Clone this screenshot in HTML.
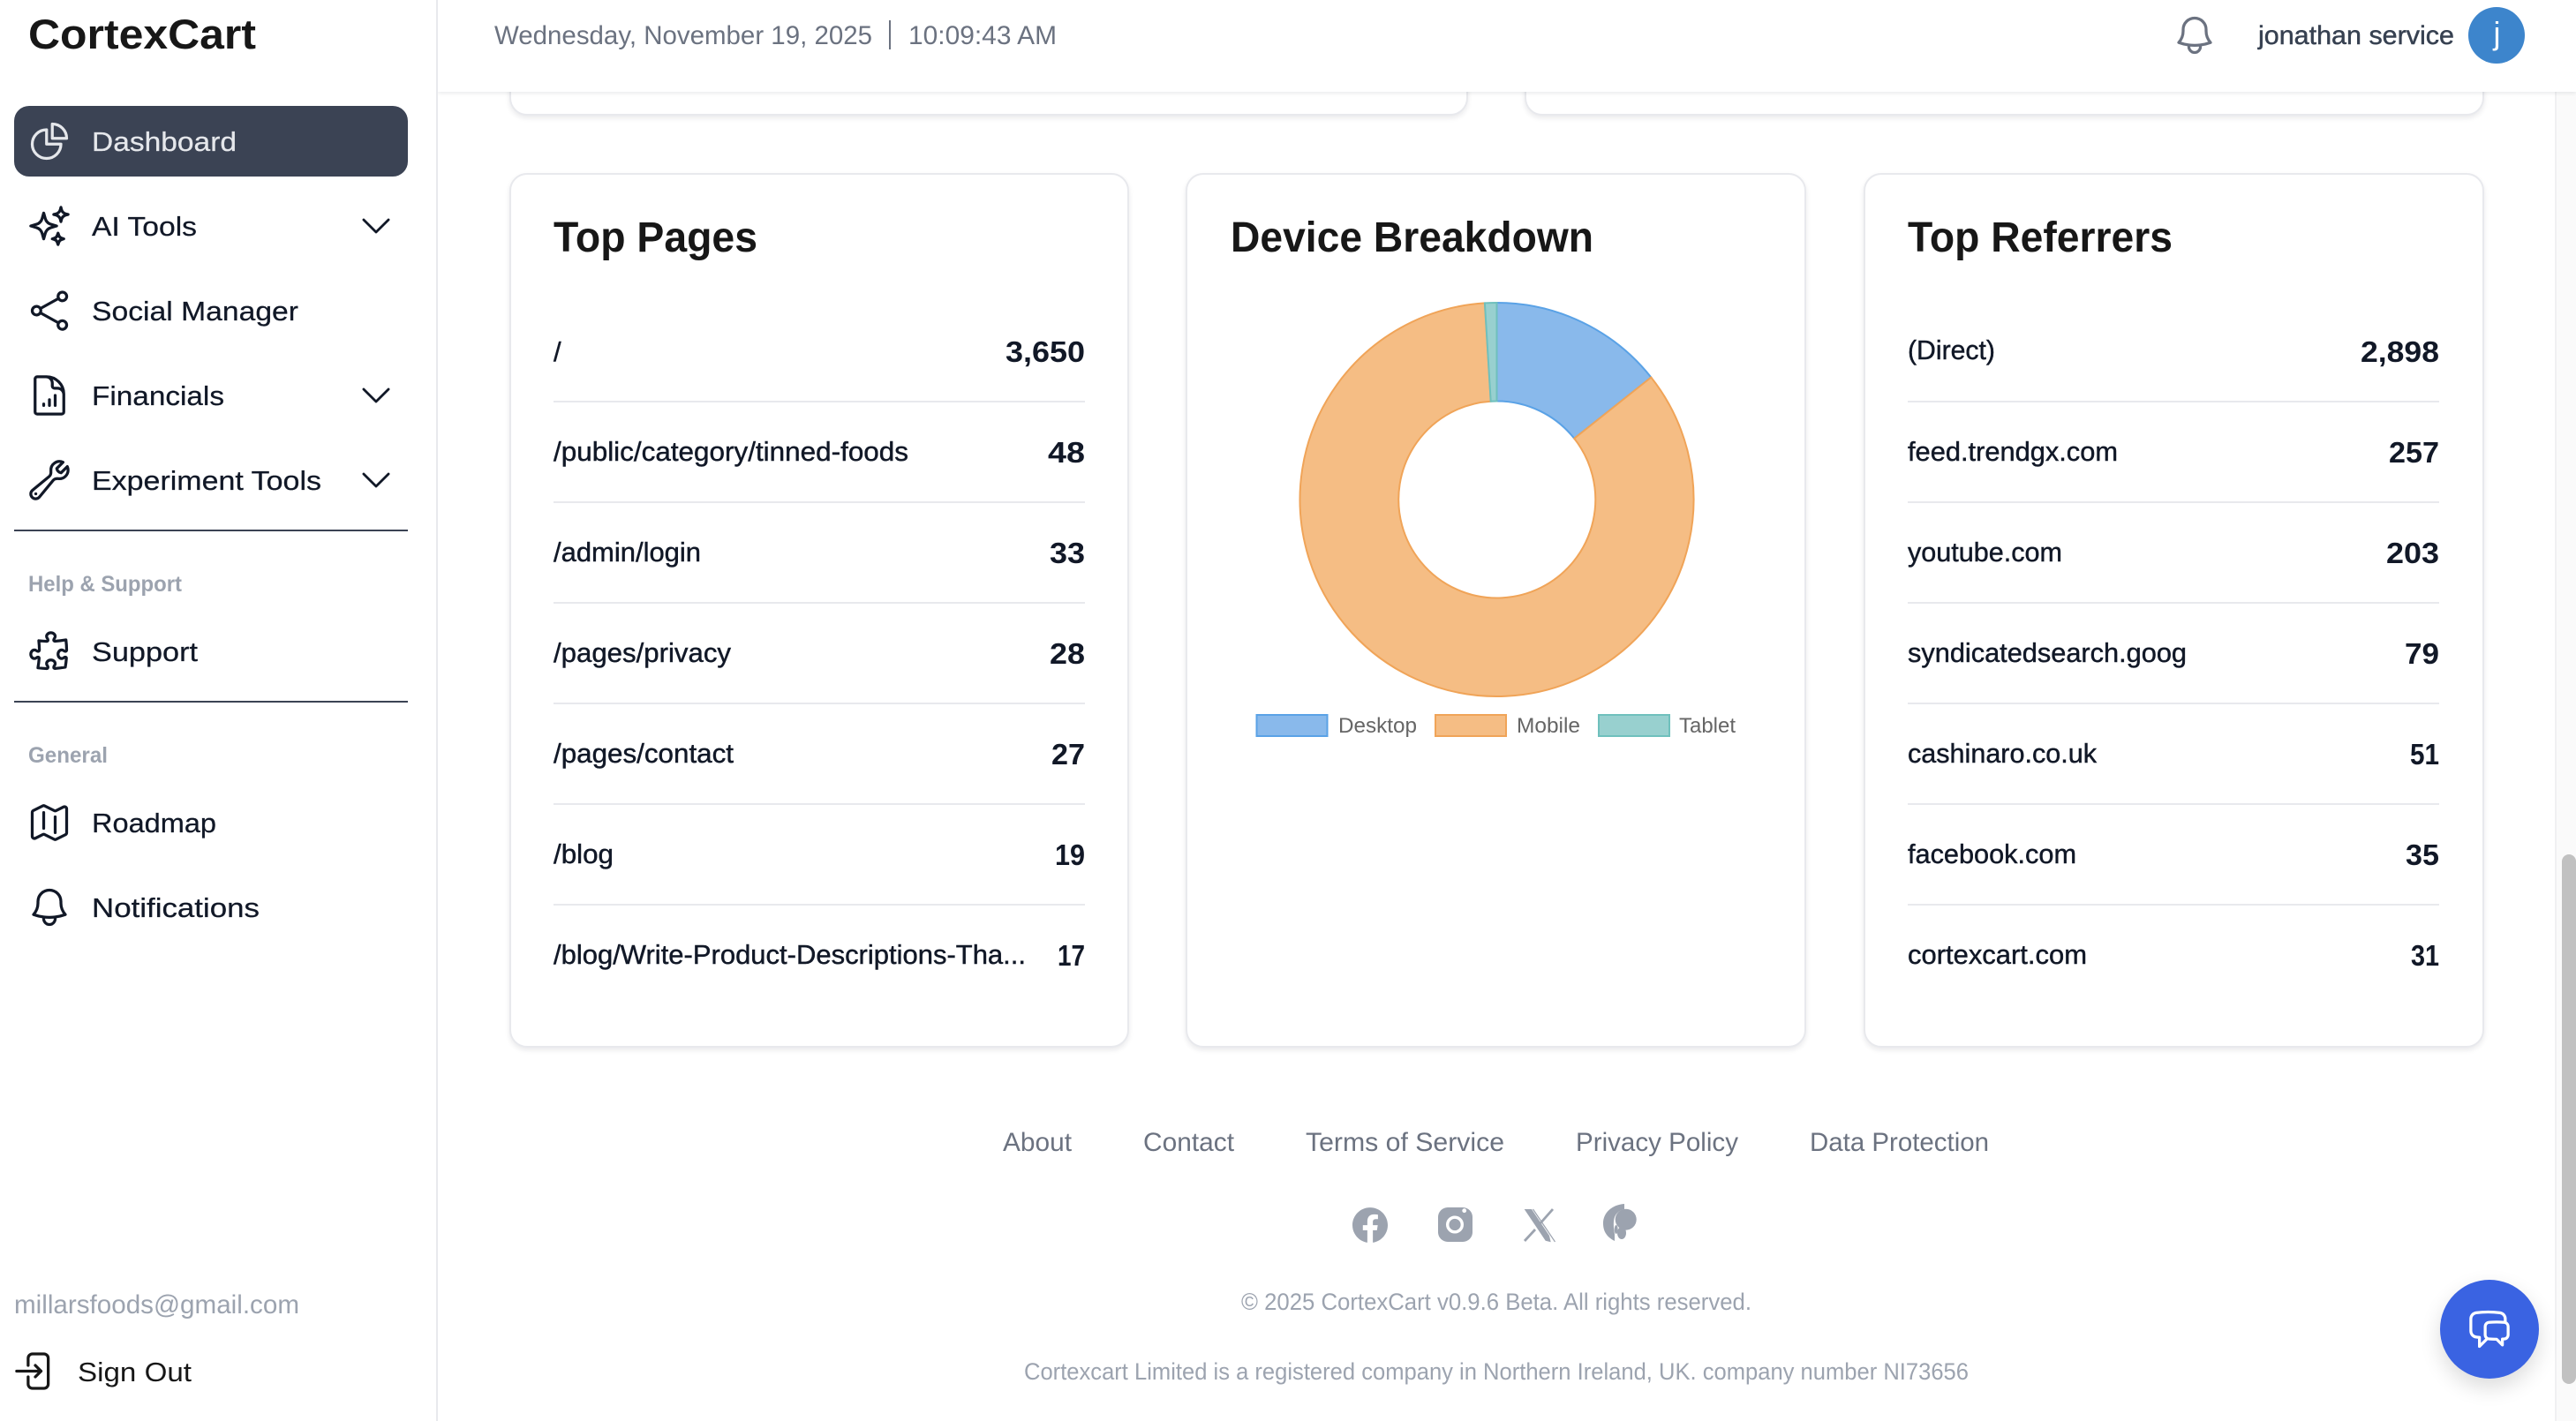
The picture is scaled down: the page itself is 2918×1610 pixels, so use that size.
<!DOCTYPE html>
<html lang="en"><head><meta charset="utf-8"><title>CortexCart Dashboard</title>
<style>
html,body{margin:0;padding:0;width:2918px;height:1610px;overflow:hidden;background:#fff}
div{position:absolute;box-sizing:border-box}
.card{background:#fff;border:2px solid #e8e9ed;border-radius:20px;box-shadow:0 3px 6px rgba(17,24,39,.09)}
svg#o{position:absolute;left:0;top:0;z-index:5}
text{font-family:"Liberation Sans",Arial,sans-serif;fill:#111827;font-size:31px}
.m{stroke:#111827;stroke-width:.45px}
.nv{fill:#111827;stroke:#111827;stroke-width:.25px}
.n{font-weight:700;font-size:33px}
.t{font-weight:700;font-size:48px;fill:#171717}
.g{fill:#9ca3af}
.f{fill:#6b7280;font-size:30px}
.c{fill:#9ca3af;font-size:27px}
.h{fill:#9ca3af;font-weight:700;font-size:25px}
.l{fill:#666;font-size:24px}
.i{fill:none;stroke:#111827;stroke-width:1.5;stroke-linecap:round;stroke-linejoin:round}
</style></head><body>
<div style="left:0;top:0;width:496px;height:1610px;background:#fff;border-right:2px solid #e8e9ed;z-index:3"></div>
<div style="left:2894px;top:104px;width:24px;height:1506px;background:#fafafa;border-left:2px solid #f0f0f2"></div>
<div style="left:2902px;top:968px;width:16px;height:600px;background:#c1c1c1;border-radius:8px"></div>
<div class="card" style="left:577px;top:-60px;width:1086px;height:191px"></div>
<div class="card" style="left:1727px;top:-60px;width:1087px;height:191px"></div>
<div class="card" style="left:577px;top:196px;width:702px;height:991px"></div>
<div class="card" style="left:1343px;top:196px;width:703px;height:991px"></div>
<div class="card" style="left:2111px;top:196px;width:703px;height:991px"></div>
<div style="left:496px;top:0;width:2422px;height:104px;background:#fff;box-shadow:0 2px 4px rgba(17,24,39,.08);z-index:2"></div>
<div style="left:16px;top:120px;width:446px;height:80px;background:#3b4354;border-radius:17px;z-index:4"></div>
<div style="left:16px;top:600px;width:446px;height:2px;background:#3b4354;z-index:4"></div>
<div style="left:16px;top:794px;width:446px;height:2px;background:#3b4354;z-index:4"></div>
<div style="left:2764px;top:1450px;width:112px;height:112px;background:#3a63e2;border-radius:50%;box-shadow:0 10px 24px rgba(0,0,0,.14);z-index:4"></div>
<div style="left:2796px;top:8px;width:64px;height:64px;background:#3d85cc;border-radius:50%;z-index:4"></div>

<svg id="o" width="2918" height="1610" viewBox="0 0 2918 1610" xmlns="http://www.w3.org/2000/svg">
<!-- brand -->
<text x="32" y="55" textLength="258" lengthAdjust="spacingAndGlyphs" style="font-size:47px;font-weight:700;fill:#171717">CortexCart</text>

<!-- nav icons -->
<svg x="30" y="134" width="52" height="52" viewBox="0 0 24 24"><g class="i" style="stroke:#e5e7eb"><path d="M10.5 6a7.5 7.5 0 1 0 7.5 7.5h-7.5V6Z"/><path d="M13.5 10.5H21A7.5 7.5 0 0 0 13.5 3v7.5Z"/></g></svg>
<svg x="30" y="230" width="52" height="52" viewBox="0 0 24 24"><path class="i" d="M9.813 15.904 9 18.75l-.813-2.846a4.5 4.5 0 0 0-3.09-3.09L2.25 12l2.846-.813a4.5 4.5 0 0 0 3.09-3.09L9 5.25l.813 2.846a4.5 4.5 0 0 0 3.09 3.09L15.75 12l-2.846.813a4.5 4.5 0 0 0-3.09 3.09ZM18.259 8.715 18 9.75l-.259-1.035a3.375 3.375 0 0 0-2.455-2.456L14.25 6l1.036-.259a3.375 3.375 0 0 0 2.455-2.456L18 2.25l.259 1.035a3.375 3.375 0 0 0 2.456 2.456L21.75 6l-1.035.259a3.375 3.375 0 0 0-2.456 2.456ZM16.894 20.567 16.5 21.75l-.394-1.183a2.25 2.25 0 0 0-1.423-1.423L13.5 18.75l1.183-.394a2.25 2.25 0 0 0 1.423-1.423l.394-1.183.394 1.183a2.25 2.25 0 0 0 1.423 1.423l1.183.394-1.183.394a2.25 2.25 0 0 0-1.423 1.423Z"/></svg>
<svg x="30" y="326" width="52" height="52" viewBox="0 0 24 24"><path class="i" d="M7.217 10.907a2.25 2.25 0 1 0 0 2.186m0-2.186c.18.324.283.696.283 1.093s-.103.77-.283 1.093m0-2.186 9.566-5.314m-9.566 7.5 9.566 5.314m0 0a2.25 2.25 0 1 0 3.935 2.186 2.25 2.25 0 0 0-3.935-2.186Zm0-12.814a2.25 2.25 0 1 0 3.933-2.185 2.25 2.25 0 0 0-3.933 2.185Z"/></svg>
<svg x="30" y="422" width="52" height="52" viewBox="0 0 24 24"><path class="i" d="M19.5 14.25v-2.625a3.375 3.375 0 0 0-3.375-3.375h-1.5A1.125 1.125 0 0 1 13.5 7.125v-1.5a3.375 3.375 0 0 0-3.375-3.375H8.25M9 16.5v.75m3-3v3M15 12v5.25m-4.5-15H5.625c-.621 0-1.125.504-1.125 1.125v17.25c0 .621.504 1.125 1.125 1.125h12.75c.621 0 1.125-.504 1.125-1.125V11.25a9 9 0 0 0-9-9Z"/></svg>
<svg x="30" y="518" width="52" height="52" viewBox="0 0 24 24"><path class="i" d="M21.75 6.75a4.5 4.5 0 0 1-4.884 4.484c-1.076-.091-2.264.071-2.95.904l-7.152 8.684a2.548 2.548 0 1 1-3.586-3.586l8.684-7.152c.833-.686.995-1.874.904-2.95a4.5 4.5 0 0 1 6.336-4.486l-3.276 3.276a3.004 3.004 0 0 0 2.25 2.25l3.276-3.276c.258.59.398 1.24.398 1.852Z"/><path class="i" d="M4.867 19.125h.008v.008h-.008v-.008Z"/></svg>
<svg x="30" y="712" width="52" height="52" viewBox="0 0 24 24"><path class="i" d="M14.25 6.087c0-.355.186-.676.401-.959.221-.29.349-.634.349-1.003 0-1.036-1.007-1.875-2.25-1.875s-2.25.84-2.25 1.875c0 .369.128.713.349 1.003.215.283.401.604.401.959a.64.64 0 0 1-.657.643 48.39 48.39 0 0 1-4.163-.3c.186 1.613.293 3.25.315 4.907a.656.656 0 0 1-.658.663c-.355 0-.676-.186-.959-.401a1.647 1.647 0 0 0-1.003-.349c-1.036 0-1.875 1.007-1.875 2.25s.84 2.25 1.875 2.25c.369 0 .713-.128 1.003-.349.283-.215.604-.401.959-.401.31 0 .555.26.532.57a48.039 48.039 0 0 1-.642 5.056c1.518.19 3.058.309 4.616.354a.64.64 0 0 0 .657-.643c0-.355-.186-.676-.401-.959a1.647 1.647 0 0 1-.349-1.003c0-1.035 1.008-1.875 2.25-1.875 1.243 0 2.25.84 2.25 1.875 0 .369-.128.713-.349 1.003-.215.283-.4.604-.4.959 0 .333.277.599.61.58a48.1 48.1 0 0 0 5.427-.63 48.05 48.05 0 0 0 .582-4.717.532.532 0 0 0-.533-.57c-.355 0-.676.186-.959.401-.29.221-.634.349-1.003.349-1.035 0-1.875-1.007-1.875-2.25s.84-2.25 1.875-2.25c.37 0 .713.128 1.003.349.283.215.604.401.96.401a.656.656 0 0 0 .658-.663 48.422 48.422 0 0 0-.37-5.36c-1.886.342-3.81.574-5.766.689a.578.578 0 0 1-.61-.58Z"/></svg>
<svg x="30" y="906" width="52" height="52" viewBox="0 0 24 24"><path class="i" d="M9 6.75V15m6-6v8.25m.503 3.498 4.875-2.437c.381-.19.622-.58.622-1.006V4.82c0-.836-.88-1.38-1.628-1.006l-3.869 1.934c-.317.159-.69.159-1.006 0L9.503 3.252a1.125 1.125 0 0 0-1.006 0L3.622 5.689C3.24 5.88 3 6.27 3 6.695V19.18c0 .836.88 1.38 1.628 1.006l3.869-1.934c.317-.159.69-.159 1.006 0l4.994 2.497c.317.158.69.158 1.006 0Z"/></svg>
<svg x="30" y="1002" width="52" height="52" viewBox="0 0 24 24"><path class="i" d="M14.857 17.082a23.848 23.848 0 0 0 5.454-1.31A8.967 8.967 0 0 1 18 9.75V9A6 6 0 0 0 6 9v.75a8.967 8.967 0 0 1-2.312 6.022c1.733.64 3.56 1.085 5.455 1.31m5.714 0a24.255 24.255 0 0 1-5.714 0m5.714 0a3 3 0 1 1-5.714 0"/></svg>
<svg x="14" y="1527.5" width="52" height="52" viewBox="0 0 24 24"><path class="i" style="stroke:#171717" d="M8.25 9V5.25A2.25 2.25 0 0 1 10.5 3h6a2.25 2.25 0 0 1 2.25 2.25v13.5A2.25 2.25 0 0 1 16.5 21h-6a2.25 2.25 0 0 1-2.25-2.25V15M12 9l3 3m0 0-3 3m3-3H2.25"/></svg>
<!-- chevrons -->
<svg x="403.5" y="233.5" width="45" height="45" viewBox="0 0 24 24"><path class="i" d="m19.5 8.25-7.5 7.5-7.5-7.5"/></svg>
<svg x="403.5" y="425.5" width="45" height="45" viewBox="0 0 24 24"><path class="i" d="m19.5 8.25-7.5 7.5-7.5-7.5"/></svg>
<svg x="403.5" y="521.5" width="45" height="45" viewBox="0 0 24 24"><path class="i" d="m19.5 8.25-7.5 7.5-7.5-7.5"/></svg>

<!-- nav text -->
<text x="104" y="171" textLength="164" lengthAdjust="spacingAndGlyphs" style="fill:#e5e7eb;stroke:#e5e7eb;stroke-width:.25px">Dashboard</text>
<text class="nv" x="104" y="267" textLength="119" lengthAdjust="spacingAndGlyphs">AI Tools</text>
<text class="nv" x="104" y="363" textLength="234" lengthAdjust="spacingAndGlyphs">Social Manager</text>
<text class="nv" x="104" y="459" textLength="150" lengthAdjust="spacingAndGlyphs">Financials</text>
<text class="nv" x="104" y="555" textLength="260" lengthAdjust="spacingAndGlyphs">Experiment Tools</text>
<text class="h" x="32" y="670" textLength="174" lengthAdjust="spacingAndGlyphs">Help &amp; Support</text>
<text class="nv" x="104" y="749" textLength="120" lengthAdjust="spacingAndGlyphs">Support</text>
<text class="h" x="32" y="864" textLength="90" lengthAdjust="spacingAndGlyphs">General</text>
<text class="nv" x="104" y="943" textLength="141" lengthAdjust="spacingAndGlyphs">Roadmap</text>
<text class="nv" x="104" y="1039" textLength="190" lengthAdjust="spacingAndGlyphs">Notifications</text>
<text class="g" x="16" y="1488" textLength="323" lengthAdjust="spacingAndGlyphs" style="font-size:30px">millarsfoods@gmail.com</text>
<text x="88" y="1565" textLength="129" lengthAdjust="spacingAndGlyphs" style="fill:#171717">Sign Out</text>

<!-- header -->
<text class="f" x="560" y="50" textLength="428" lengthAdjust="spacingAndGlyphs">Wednesday, November 19, 2025</text>
<rect x="1007" y="23" width="2" height="33" fill="#6b7280"/>
<text class="f" x="1029" y="50" textLength="168" lengthAdjust="spacingAndGlyphs">10:09:43 AM</text>
<svg x="2460" y="14" width="52" height="52" viewBox="0 0 24 24"><path class="i" style="stroke:#6b7280" d="M14.857 17.082a23.848 23.848 0 0 0 5.454-1.31A8.967 8.967 0 0 1 18 9.75V9A6 6 0 0 0 6 9v.75a8.967 8.967 0 0 1-2.312 6.022c1.733.64 3.56 1.085 5.455 1.31m5.714 0a24.255 24.255 0 0 1-5.714 0m5.714 0a3 3 0 1 1-5.714 0"/></svg>
<text x="2558" y="50" textLength="222" lengthAdjust="spacingAndGlyphs" style="fill:#374151;stroke:#374151;stroke-width:.45px;font-size:30px">jonathan service</text>
<text x="2828.5" y="50" text-anchor="middle" style="fill:#fff;font-size:36px">j</text>

<!-- titles -->
<text class="t" x="627" y="285" textLength="231" lengthAdjust="spacingAndGlyphs">Top Pages</text>
<text class="t" x="1394" y="285" textLength="411" lengthAdjust="spacingAndGlyphs">Device Breakdown</text>
<text class="t" x="2161" y="285" textLength="300" lengthAdjust="spacingAndGlyphs">Top Referrers</text>

<!-- rules -->
<g fill="#e8e9ed">
<rect x="627" y="454" width="602" height="2"/><rect x="627" y="568" width="602" height="2"/><rect x="627" y="682" width="602" height="2"/><rect x="627" y="796" width="602" height="2"/><rect x="627" y="910" width="602" height="2"/><rect x="627" y="1024" width="602" height="2"/>
<rect x="2161" y="454" width="602" height="2"/><rect x="2161" y="568" width="602" height="2"/><rect x="2161" y="682" width="602" height="2"/><rect x="2161" y="796" width="602" height="2"/><rect x="2161" y="910" width="602" height="2"/><rect x="2161" y="1024" width="602" height="2"/>
</g>

<!-- top pages -->
<text class="m" x="627" y="409">/</text>
<text class="m" x="627" y="522" textLength="402" lengthAdjust="spacingAndGlyphs">/public/category/tinned-foods</text>
<text class="m" x="627" y="636" textLength="167" lengthAdjust="spacingAndGlyphs">/admin/login</text>
<text class="m" x="627" y="750" textLength="201" lengthAdjust="spacingAndGlyphs">/pages/privacy</text>
<text class="m" x="627" y="864" textLength="204" lengthAdjust="spacingAndGlyphs">/pages/contact</text>
<text class="m" x="627" y="978" textLength="68" lengthAdjust="spacingAndGlyphs">/blog</text>
<text class="m" x="627" y="1092" textLength="535" lengthAdjust="spacingAndGlyphs">/blog/Write-Product-Descriptions-Tha...</text>
<text class="n" x="1139" y="410" textLength="90" lengthAdjust="spacingAndGlyphs">3,650</text>
<text class="n" x="1187" y="524" textLength="42" lengthAdjust="spacingAndGlyphs">48</text>
<text class="n" x="1189" y="638" textLength="40" lengthAdjust="spacingAndGlyphs">33</text>
<text class="n" x="1189" y="752" textLength="40" lengthAdjust="spacingAndGlyphs">28</text>
<text class="n" x="1191" y="866" textLength="38" lengthAdjust="spacingAndGlyphs">27</text>
<text class="n" x="1195" y="980" textLength="34" lengthAdjust="spacingAndGlyphs">19</text>
<text class="n" x="1198" y="1094" textLength="31" lengthAdjust="spacingAndGlyphs">17</text>

<!-- referrers -->
<text class="m" x="2161" y="407" textLength="99" lengthAdjust="spacingAndGlyphs">(Direct)</text>
<text class="m" x="2161" y="522" textLength="238" lengthAdjust="spacingAndGlyphs">feed.trendgx.com</text>
<text class="m" x="2161" y="636" textLength="175" lengthAdjust="spacingAndGlyphs">youtube.com</text>
<text class="m" x="2161" y="750" textLength="316" lengthAdjust="spacingAndGlyphs">syndicatedsearch.goog</text>
<text class="m" x="2161" y="864" textLength="214" lengthAdjust="spacingAndGlyphs">cashinaro.co.uk</text>
<text class="m" x="2161" y="978" textLength="191" lengthAdjust="spacingAndGlyphs">facebook.com</text>
<text class="m" x="2161" y="1092" textLength="203" lengthAdjust="spacingAndGlyphs">cortexcart.com</text>
<text class="n" x="2674" y="410" textLength="89" lengthAdjust="spacingAndGlyphs">2,898</text>
<text class="n" x="2706" y="524" textLength="57" lengthAdjust="spacingAndGlyphs">257</text>
<text class="n" x="2703" y="638" textLength="60" lengthAdjust="spacingAndGlyphs">203</text>
<text class="n" x="2724" y="752" textLength="39" lengthAdjust="spacingAndGlyphs">79</text>
<text class="n" x="2730" y="866" textLength="33" lengthAdjust="spacingAndGlyphs">51</text>
<text class="n" x="2725" y="980" textLength="38" lengthAdjust="spacingAndGlyphs">35</text>
<text class="n" x="2731" y="1094" textLength="32" lengthAdjust="spacingAndGlyphs">31</text>

<!-- donut -->
<g stroke-width="2">
<path d="M1695.5 343A223 223 0 0 1 1870.3 427.5L1783.2 496.8A111.5 111.5 0 0 0 1695.5 454.5Z" fill="#89b9eb" stroke="#5aa2e6"/>
<path d="M1870.3 427.5A223 223 0 1 1 1681.9 343.4L1688.7 454.7A111.5 111.5 0 1 0 1783.2 496.8Z" fill="#f5bd84" stroke="#f0a458"/>
<path d="M1681.9 343.4A223 223 0 0 1 1695.5 343L1695.5 454.5A111.5 111.5 0 0 0 1688.7 454.7Z" fill="#98d0cf" stroke="#6fc0bd"/>
</g>
<rect x="1423.5" y="810" width="80" height="24" fill="#89b9eb" stroke="#5aa2e6" stroke-width="2"/>
<text class="l" x="1516" y="830" textLength="89" lengthAdjust="spacingAndGlyphs">Desktop</text>
<rect x="1626" y="810" width="80" height="24" fill="#f5bd84" stroke="#f0a458" stroke-width="2"/>
<text class="l" x="1718" y="830" textLength="72" lengthAdjust="spacingAndGlyphs">Mobile</text>
<rect x="1811" y="810" width="80" height="24" fill="#98d0cf" stroke="#6fc0bd" stroke-width="2"/>
<text class="l" x="1902" y="830" textLength="64" lengthAdjust="spacingAndGlyphs">Tablet</text>

<!-- footer -->
<text class="f" x="1136" y="1304" textLength="78" lengthAdjust="spacingAndGlyphs">About</text>
<text class="f" x="1295" y="1304" textLength="103" lengthAdjust="spacingAndGlyphs">Contact</text>
<text class="f" x="1479" y="1304" textLength="225" lengthAdjust="spacingAndGlyphs">Terms of Service</text>
<text class="f" x="1785" y="1304" textLength="184" lengthAdjust="spacingAndGlyphs">Privacy Policy</text>
<text class="f" x="2050" y="1304" textLength="203" lengthAdjust="spacingAndGlyphs">Data Protection</text>

<!-- socials -->
<svg x="1532" y="1368" width="40" height="40" viewBox="0 0 24 24"><path fill="#9ca3af" d="M24 12.073c0-6.627-5.373-12-12-12s-12 5.373-12 12c0 5.99 4.388 10.954 10.125 11.854v-8.385H7.078v-3.47h3.047V9.43c0-3.007 1.792-4.669 4.533-4.669 1.312 0 2.686.235 2.686.235v2.953H15.83c-1.491 0-1.956.925-1.956 1.874v2.25h3.328l-.532 3.47h-2.796v8.385C19.612 23.027 24 18.062 24 12.073z"/></svg>
<rect x="1629" y="1368" width="39" height="39" rx="11" fill="#9ca3af"/>
<circle cx="1648" cy="1387.5" r="8.3" fill="none" stroke="#fff" stroke-width="3.4"/>
<circle cx="1658.7" cy="1371.7" r="2.4" fill="#fff"/>
<path d="M1726.7 1370H1735L1755 1400L1756.7 1407.3L1750.7 1405.7Z" fill="#9ca3af"/>
<path d="M1736.5 1370L1761.5 1407" stroke="#9ca3af" stroke-width="1.2" fill="none"/>
<path d="M1759 1370L1743.5 1387.5M1739 1393L1727 1406" stroke="#9ca3af" stroke-width="2.8" fill="none"/>
<path d="M1840 1364C1826 1365 1816 1374 1816 1386C1816 1396 1821 1402 1829 1406L1829 1398C1828 1392 1827 1385 1829 1379C1831 1374 1835 1371 1840 1370Z" fill="#9ca3af"/>
<circle cx="1841.7" cy="1381.7" r="12" fill="#9ca3af"/>
<ellipse cx="1837" cy="1397" rx="5" ry="7" fill="#9ca3af"/>
<ellipse cx="1830.7" cy="1393" rx="2" ry="5" fill="#9ca3af"/>

<text class="c" x="1406" y="1484" textLength="578" lengthAdjust="spacingAndGlyphs">© 2025 CortexCart v0.9.6 Beta. All rights reserved.</text>
<text class="c" x="1160" y="1563" textLength="1070" lengthAdjust="spacingAndGlyphs">Cortexcart Limited is a registered company in Northern Ireland, UK. company number NI73656</text>

<!-- chat icon -->
<svg x="2794" y="1480" width="52" height="52" viewBox="0 0 24 24"><path class="i" style="stroke:#fff" d="M20.25 8.511c.884.284 1.5 1.128 1.5 2.097v4.286c0 1.136-.847 2.1-1.98 2.193-.34.027-.68.052-1.02.072v3.091l-3-3c-1.354 0-2.694-.055-4.02-.163a2.115 2.115 0 0 1-.825-.242m9.345-8.334a2.126 2.126 0 0 0-.476-.095 48.64 48.64 0 0 0-8.048 0c-1.131.094-1.976 1.057-1.976 2.192v4.286c0 .837.46 1.58 1.155 1.951m9.345-8.334V6.637c0-1.621-1.152-3.026-2.76-3.235A48.455 48.455 0 0 0 11.25 3c-2.115 0-4.198.137-6.24.402-1.608.209-2.76 1.614-2.76 3.235v6.226c0 1.621 1.152 3.026 2.76 3.235.577.075 1.157.14 1.74.194V21l4.155-4.155"/></svg>
</svg>
</body></html>
